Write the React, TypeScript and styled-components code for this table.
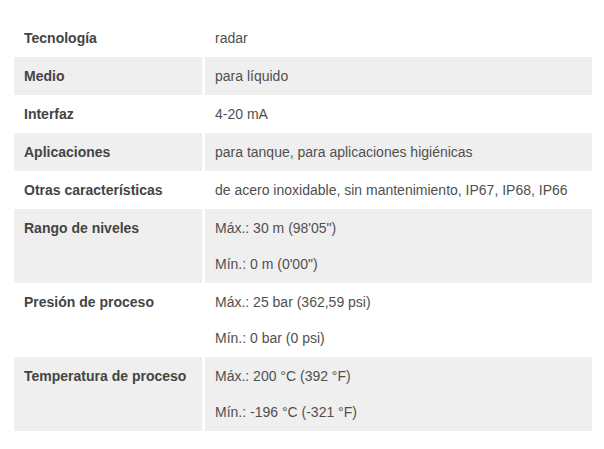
import React from "react";
import styled, { createGlobalStyle } from "styled-components";

const Global = createGlobalStyle`
  html, body { margin: 0; padding: 0; background: #ffffff; }
  body { font-family: "Liberation Sans", Arial, sans-serif; }
`;

const Page = styled.div`
  padding: 19px 12px 17px 14px;
`;

const Table = styled.div`
  display: flex;
  flex-direction: column;
  width: 578px;
`;

const Row = styled.div<{ $shaded: boolean }>`
  display: grid;
  grid-template-columns: 188px 387px;
  column-gap: 3px;
  & > div {
    background: ${(p) => (p.$shaded ? "#efefef" : "transparent")};
  }
`;

const Label = styled.div`
  padding: 11px 10px 11px;
  font-size: 14px;
  line-height: 16px;
  font-weight: bold;
  color: #444444;
`;

const Value = styled.div`
  padding: 11px 10px 11px;
  font-size: 14px;
  line-height: 16px;
  color: #4f4f4f;
  display: flex;
  flex-direction: column;
  gap: 20px;
`;

const rows: { label: string; values: string[] }[] = [
  { label: "Tecnología", values: ["radar"] },
  { label: "Medio", values: ["para líquido"] },
  { label: "Interfaz", values: ["4-20 mA"] },
  { label: "Aplicaciones", values: ["para tanque, para aplicaciones higiénicas"] },
  { label: "Otras características", values: ["de acero inoxidable, sin mantenimiento, IP67, IP68, IP66"] },
  { label: "Rango de niveles", values: ["Máx.: 30 m (98'05\")", "Mín.: 0 m (0'00\")"] },
  { label: "Presión de proceso", values: ["Máx.: 25 bar (362,59 psi)", "Mín.: 0 bar (0 psi)"] },
  { label: "Temperatura de proceso", values: ["Máx.: 200 °C (392 °F)", "Mín.: -196 °C (-321 °F)"] },
];

export default function App() {
  return (
    <Page>
      <Global />
      <Table>
        {rows.map((r, i) => (
          <Row key={r.label} $shaded={i % 2 === 1}>
            <Label>{r.label}</Label>
            <Value>
              {r.values.map((v) => (
                <span key={v}>{v}</span>
              ))}
            </Value>
          </Row>
        ))}
      </Table>
    </Page>
  );
}
